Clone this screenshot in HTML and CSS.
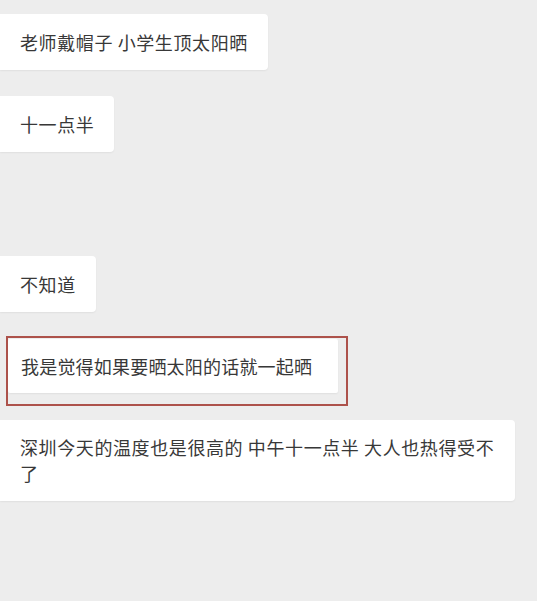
FILE: index.html
```html
<!DOCTYPE html>
<html lang="zh">
<head>
<meta charset="utf-8">
<link rel="stylesheet" href="styles.css">
</head>
<body>
<div class="chat">
  <div class="bubble b1">老师戴帽子 小学生顶太阳晒</div>
  <div class="bubble b2">十一点半</div>
  <div class="bubble b3">不知道</div>
  <div class="mark">
    <div class="bubble b4">我是觉得如果要晒太阳的话就一起晒</div>
  </div>
  <div class="bubble b5">深圳今天的温度也是很高的 中午十一点半 大人也热得受不了</div>
</div>
</body>
</html>
```
FILE: styles.css
```css
html, body {
  margin: 0;
  padding: 0;
  background: #ededed;
}
body {
  width: 537px;
  height: 601px;
  overflow: hidden;
  font-family: "Noto Sans CJK SC", "Noto Sans", sans-serif;
  color: #383838;
}
.chat {
  display: flex;
  flex-direction: column;
  align-items: flex-start;
  padding-top: 14px;
}
.bubble {
  background: #fff;
  border-radius: 0 4px 4px 0;
  box-shadow: 0 1px 2px rgba(0,0,0,0.06);
  font-size: 18px;
  line-height: 26px;
  padding: 15px 20px;
  box-sizing: border-box;
  letter-spacing: 0.6px;
  white-space: nowrap;
}
.b1 { width: 268px; height: 56px; }
.b2 { width: 114px; height: 56px; margin-top: 26px; }
.b3 { width: 96px; height: 56px; margin-top: 104px; }
.mark {
  margin-top: 24px;
  margin-left: 6px;
  width: 342px;
  height: 70px;
  box-sizing: border-box;
  border: 2px solid #ad524b;
  padding: 1px 0 0 0;
}
.b4 {
  width: 330px;
  height: 54px;
  padding: 14px 13px;
  border-radius: 2px;
  letter-spacing: 0.2px;
}
.b5 {
  width: 515px;
  height: 81px;
  margin-top: 14px;
  padding: 14px 16px 14px 20px;
  line-height: 26px;
  white-space: normal;
}
```
